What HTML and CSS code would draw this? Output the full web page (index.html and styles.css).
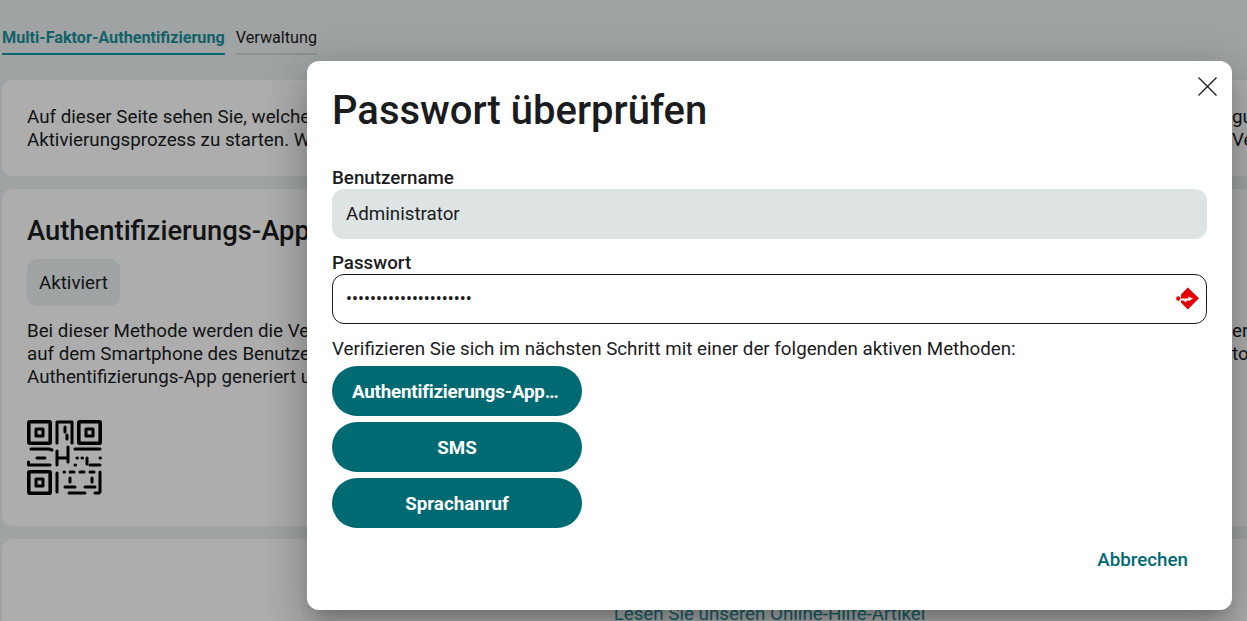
FILE: index.html
```html
<!DOCTYPE html>
<html lang="de">
<head>
<meta charset="utf-8">
<title>Passwort überprüfen</title>
<link rel="stylesheet" href="styles.css">
</head>
<body>
<div class="stage">
  <main class="page">
    <nav class="tabs">
      <a class="tab tab-active">Multi-Faktor-Authentifizierung</a>
      <a class="tab">Verwaltung</a>
    </nav>
    <section class="card card-intro">
      <div class="line"><span class="left">Auf dieser Seite sehen Sie, welche Methoden verfügbar sind</span><span>gungsmethoden</span></div>
      <div class="line"><span class="left">Aktivierungsprozess zu starten. Wenn Sie eine Methode deaktivieren</span><span>Verfügung</span></div>
    </section>
    <section class="card card-app">
      <h2 class="card-title">Authentifizierungs-App</h2>
      <div class="badge">Aktiviert</div>
      <div class="copy">
        <div class="line"><span class="left">Bei dieser Methode werden die Verifizierungscodes</span><span>erden</span></div>
        <div class="line"><span class="left">auf dem Smartphone des Benutzers erzeugt</span><span>tor</span></div>
        <div class="line"><span class="left">Authentifizierungs-App generiert und eingegeben</span></div>
      </div>
      <svg class="qr" viewBox="0 0 75 75" fill="none" stroke="#000" stroke-width="3" stroke-linecap="round" stroke-linejoin="round">
        <g stroke-width="3.6">
          <rect x="1.8" y="1.8" width="21.4" height="21.4" rx="1"/>
          <rect x="51.8" y="1.8" width="21.4" height="21.4" rx="1"/>
          <rect x="1.8" y="51.8" width="21.4" height="21.4" rx="1"/>
        </g>
        <rect x="9" y="9" width="7" height="7"/>
        <rect x="59" y="9" width="7" height="7"/>
        <rect x="9" y="59" width="7" height="7"/>
        <path d="M30 23V2H45V23M38 7V12M40 15V19"/>
        <path d="M4 29H22L25 30M10 38H18M1.500 42V45H23"/>
        <path d="M30 31V45M30 38H41M41 27V42"/>
        <path d="M48 29H73M50 38h.5M55 38h.5M60 38V44M63 45H73M73 38h.5M48 45h.5"/>
        <path d="M30 53V72M37 52h.5M43 52h4M53 52h4M63 52h4M73 52V72M43 58V62M65 58V62M38 67H48M58 67H68M42 73H58M68 73H72"/>
      </svg>
    </section>
    <section class="card card-help">
      <a class="help-link">Lesen Sie unseren Online-Hilfe-Artikel</a>
    </section>
  </main>
  <div class="overlay">
    <div class="modal">
      <button class="close" aria-label="Schließen">
        <svg viewBox="0 0 20 20" width="20" height="20" fill="none" stroke="#1a1c1e" stroke-width="1.3"><path d="M1.500 0.500L19.500 18.500M19.500 0.500L1.500 18.500"/></svg>
      </button>
      <h1 class="modal-title">Passwort überprüfen</h1>
      <label class="label">Benutzername</label>
      <div class="field field-readonly">Administrator</div>
      <label class="label">Passwort</label>
      <div class="field field-password">
        <span class="dots">•••••••••••••••••••••</span>
        <svg class="key" viewBox="0 0 24 24" width="24" height="24">
          <path fill="#e30000" d="M11.800 0.500L23 11.200L11.800 22.500L5 15.500V7.500Z"/>
          <circle cx="2.300" cy="11.500" r="2.200" fill="#e30000"/>
          <path fill="none" stroke="#fff" stroke-width="1.800" d="M4.500 12.500H13M9.500 12.500V15"/>
          <path fill="#fff" d="M12 9.500L17 11.500L13 14Z"/>
        </svg>
      </div>
      <p class="hint">Verifizieren Sie sich im nächsten Schritt mit einer der folgenden aktiven Methoden:</p>
      <div class="methods">
        <button class="method"><span class="method-text method-long">Authentifizierungs-App-Verifizierung</span></button>
        <button class="method"><span class="method-text">SMS</span></button>
        <button class="method"><span class="method-text">Sprachanruf</span></button>
      </div>
      <div class="actions"><button class="cancel">Abbrechen</button></div>
    </div>
  </div>
</div>
</body>
</html>
```
FILE: styles.css
```css
* { box-sizing: border-box; }
html, body { margin: 0; height: 100%; overflow: hidden; }
body { font-family: Roboto, "Liberation Sans", sans-serif; color: #1a1c1e; font-size: 18.75px; line-height: 23px; background: #eaf0f0; }
.stage { position: relative; width: 1539px; height: 621px; overflow: hidden; }
.page { padding: 0 2px; display: flex; flex-direction: column; height: 900px; }
.tabs { display: flex; gap: 11px; padding-top: 27px; height: 80px; align-items: flex-start; }
.tab { font-size: 16.2px; line-height: 22px; padding-bottom: 4px; border-bottom: 2px solid #d0d3d4; font-weight: 400; }
.tab-active { color: #1b909b; font-weight: 700; border-bottom-color: #149aa5; }
.card { background: #fff; border-radius: 10px; padding: 26px 25px 25px; margin-bottom: 13px; }
.card-intro { height: 96px; }
.card-app { height: 337px; padding-top: 25px; }
.card-help { flex: 1; padding-top: 64px; text-align: center; margin-bottom: 0; }
.line { display: grid; grid-template-columns: 1205px auto; white-space: nowrap; }
.left { overflow: hidden; }
.card-title { margin: 0; font-size: 27.4px; line-height: 34px; font-weight: 500; }
.badge { display: inline-block; margin-top: 11px; padding: 13px 12px 11px; background: #eaf0f0; border-radius: 10px; }
.copy { margin-top: 14px; }
.qr { display: block; width: 75px; height: 75px; margin-top: 31px; }
.help-link { color: #1b909b; }
.overlay { position: absolute; inset: 0; background: rgba(0,0,0,.32); display: flex; justify-content: center; align-items: flex-start; padding-top: 61px; }
.modal { position: relative; width: 925px; height: 549px; background: #fff; border-radius: 12px; padding: 25px; display: flex; flex-direction: column; box-shadow: 0 11px 15px -7px rgba(0,0,0,.2), 0 24px 38px 3px rgba(0,0,0,.14), 0 9px 46px 8px rgba(0,0,0,.12); }
.close { position: absolute; top: 16px; right: 15px; padding: 0; border: 0; background: none; width: 20px; height: 20px; }
.modal-title { margin: 1px 0 32px; font-size: 40px; line-height: 48px; font-weight: 500; }
.label { font-weight: 500; line-height: 22px; display: block; }
.field { height: 50px; border-radius: 12px; margin-bottom: 13px; padding: 0 14px; display: flex; align-items: center; }
.field-readonly { background: #dee3e3; }
.field-password { border: 1px solid #1a1c1e; justify-content: space-between; padding: 0 6px 0 13px; margin-bottom: 13px; }
.dots { font-size: 17.75px; letter-spacing: 0; }
.key { display: block; }
.hint { margin: 1px 0 5px; line-height: 23px; }
.methods { display: flex; flex-direction: column; gap: 6px; }
.method { width: 250px; height: 50px; border: 0; border-radius: 25px; background: #006a72; color: #fff; font: 700 18.75px Roboto, sans-serif; padding: 1px 20px 0; }
.method-text { display: block; overflow: hidden; text-overflow: ellipsis; white-space: nowrap; }
.method-long { letter-spacing: -.2px; }
.actions { display: flex; justify-content: flex-end; margin-top: auto; padding: 0 19px 14px 0; }
.cancel { border: 0; background: none; padding: 0; color: #006a72; font: 500 18.75px Roboto, sans-serif; line-height: 22px; }
```
